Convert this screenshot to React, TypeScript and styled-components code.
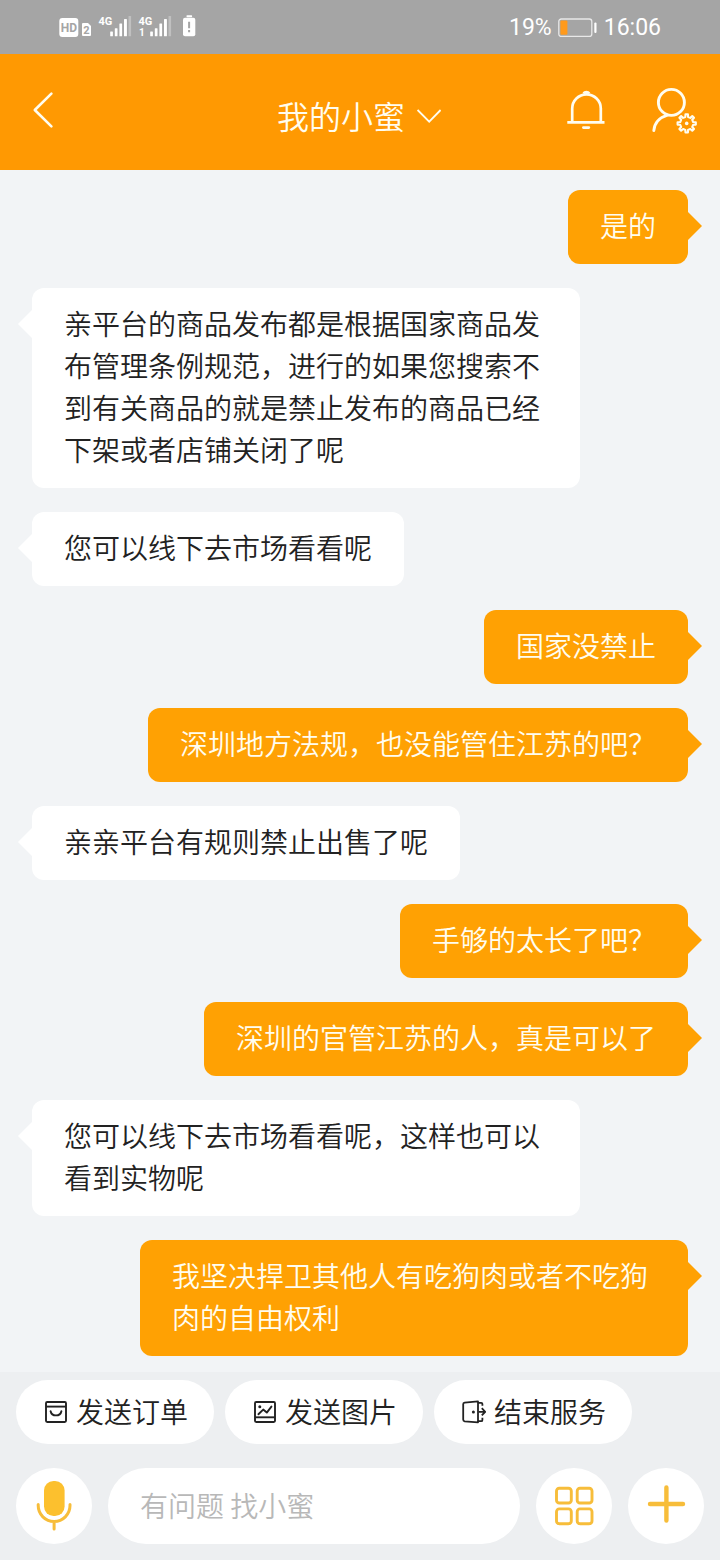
import React from "react";
import styled, { createGlobalStyle } from "styled-components";

const GlobalStyle = createGlobalStyle`
  * { box-sizing: border-box; }
  body {
    margin: 0;
    background: #f2f4f6;
    font-family: "Noto Sans CJK SC", "Noto Sans", sans-serif;
    font-weight: 350;
  }
  button, input { font: inherit; color: inherit; }
  svg { display: block; flex: none; }
`;

const Screen = styled.div`
  min-height: 100vh;
  display: flex;
  flex-direction: column;
`;

const StatusBar = styled.div`
  height: 54px;
  padding: 0 59px 0 58px;
  display: flex;
  align-items: center;
  justify-content: space-between;
  background: #a5a5a5;
  color: #fff;
  font-family: Roboto, sans-serif;
  font-size: 23px;
  line-height: 28px;
  font-weight: 400;
`;

const StatusGroup = styled.div`
  display: flex;
  align-items: center;
  gap: 6px;
  padding-top: 2px;
`;

const Header = styled.header`
  height: 116px;
  padding: 0 22px 4px 32px;
  display: grid;
  grid-template-columns: 1fr auto 1fr;
  align-items: center;
  background: #ff9902;
  color: #fffdf0;
`;

const IconButton = styled.button`
  padding: 0;
  border: 0;
  background: none;
  cursor: pointer;
`;

const TitleButton = styled(IconButton)`
  display: flex;
  align-items: center;
  gap: 12px;
  padding-top: 10px;
  margin-left: -12px;
  font-size: 32px;
  line-height: 40px;
`;

const HeaderActions = styled.div`
  display: flex;
  justify-content: flex-end;
  align-items: center;
  gap: 44px;
`;

const Chat = styled.main`
  flex: 1;
  padding: 20px 32px 16px;
  display: flex;
  flex-direction: column;
  gap: 24px;
`;

const Bubble = styled.div<{ $mine?: boolean }>`
  position: relative;
  align-self: ${(p) => (p.$mine ? "flex-end" : "flex-start")};
  max-width: calc(100% - 108px);
  padding: 14px 32px 18px;
  border-radius: 12px;
  background: ${(p) => (p.$mine ? "#ffa103" : "#fff")};
  color: ${(p) => (p.$mine ? "#fffdf0" : "#222")};
  font-size: 28px;
  line-height: 42px;

  &::after {
    content: "";
    position: absolute;
    top: 22px;
    ${(p) => (p.$mine ? "left: 100%;" : "right: 100%;")}
    border: 14px solid transparent;
    ${(p) =>
      p.$mine
        ? "border-right-width: 0; border-left-color: #ffa103;"
        : "border-left-width: 0; border-right-color: #fff;"}
  }
`;

const Footer = styled.footer`
  padding: 8px 16px 16px;
  display: flex;
  flex-direction: column;
  gap: 24px;
  background: #edeff1;
`;

const Shortcuts = styled.div`
  display: flex;
  gap: 11px;
`;

const Chip = styled.button`
  height: 64px;
  padding: 0 26px 0 28px;
  display: flex;
  align-items: center;
  gap: 8px;
  border: 0;
  border-radius: 32px;
  background: #fff;
  color: #222;
  font-size: 28px;
  line-height: 42px;
  white-space: nowrap;
  cursor: pointer;
`;

const ChipLabel = styled.span`
  padding-bottom: 2px;
`;

const InputRow = styled.form`
  display: flex;
  gap: 16px;
`;

const RoundButton = styled.button`
  flex: none;
  width: 76px;
  height: 76px;
  padding: 0;
  border: 0;
  border-radius: 50%;
  background: #fff;
  color: #f7bd3a;
  cursor: pointer;
`;

const MessageInput = styled.input`
  flex: 1;
  min-width: 0;
  height: 76px;
  padding: 0 32px 2px;
  border: 0;
  border-radius: 38px;
  background: #fff;
  color: #222;
  font-size: 28px;
  outline: none;

  &::placeholder {
    color: #b8b8b8;
    opacity: 1;
  }
`;

const SmallGlyphs = styled.text`
  font-family: Roboto, sans-serif;
  font-weight: 700;
`;

const messages: { text: string; mine?: boolean }[] = [
  { text: "是的", mine: true },
  {
    text: "亲平台的商品发布都是根据国家商品发布管理条例规范，进行的如果您搜索不到有关商品的就是禁止发布的商品已经下架或者店铺关闭了呢",
  },
  { text: "您可以线下去市场看看呢" },
  { text: "国家没禁止", mine: true },
  { text: "深圳地方法规，也没能管住江苏的吧？", mine: true },
  { text: "亲亲平台有规则禁止出售了呢" },
  { text: "手够的太长了吧？", mine: true },
  { text: "深圳的官管江苏的人，真是可以了", mine: true },
  { text: "您可以线下去市场看看呢，这样也可以看到实物呢" },
  { text: "我坚决捍卫其他人有吃狗肉或者不吃狗肉的自由权利", mine: true },
];

const SignalBars = ({ x }: { x: number }) => (
  <g transform={`translate(${x} 0)`}>
    <rect x="0" y="18.6" width="2.7" height="4.7" rx="0.5" />
    <rect x="4.6" y="15.3" width="2.7" height="8" rx="0.5" />
    <rect x="9.2" y="10.6" width="2.7" height="12.7" rx="0.5" />
    <rect x="13.8" y="6" width="2.9" height="17.3" rx="0.5" />
    <rect x="18.3" y="3" width="2.6" height="20.3" rx="0.5" opacity="0.3" />
  </g>
);

const NetworkIcons = () => (
  <svg width="140" height="28" viewBox="0 0 140 28" fill="#fff" aria-hidden="true">
    <rect x="1.3" y="5" width="19" height="19" rx="3" />
    <SmallGlyphs x="10.8" y="19" fontSize="12" textAnchor="middle" fill="#a5a5a5">
      HD
    </SmallGlyphs>
    <path d="M25 10h5l3 3v9a1 1 0 0 1-1 1h-7a1 1 0 0 1-1-1V11a1 1 0 0 1 1-1z" />
    <SmallGlyphs x="28.5" y="20.5" fontSize="11" textAnchor="middle" fill="#a5a5a5">
      2
    </SmallGlyphs>
    <SmallGlyphs x="40.5" y="12" fontSize="11">
      4G
    </SmallGlyphs>
    <SignalBars x={52.2} />
    <SmallGlyphs x="80.5" y="12" fontSize="11">
      4G
    </SmallGlyphs>
    <SmallGlyphs x="81" y="23.2" fontSize="10">
      1
    </SmallGlyphs>
    <SignalBars x={92.2} />
    <rect x="128.5" y="2.2" width="5.6" height="2" rx="0.6" />
    <rect x="125" y="4.7" width="12.3" height="18.6" rx="2" />
    <path d="M131.1 8.8v6.4M131.1 17v2.2" stroke="#a5a5a5" strokeWidth="2" />
  </svg>
);

const BatteryIcon = () => (
  <svg width="40" height="20" viewBox="0 0 40 20" fill="none" aria-hidden="true">
    <rect x="0.8" y="1" width="33" height="17.4" rx="2.5" stroke="#e8e8e8" strokeWidth="1.3" />
    <rect x="2.4" y="2.6" width="7" height="14.2" rx="1" fill="#ff9a1c" />
    <rect x="36.3" y="4.5" width="2.2" height="10.5" rx="1" fill="#fff" />
  </svg>
);

const BackIcon = () => (
  <svg width="24" height="40" viewBox="0 0 24 40" fill="none" stroke="currentColor" strokeWidth="2.6">
    <path d="M19.4 3.6 2.8 20l16.6 16.4" strokeLinecap="round" strokeLinejoin="round" />
  </svg>
);

const ChevronIcon = () => (
  <svg width="24" height="16" viewBox="0 0 24 16" fill="none" stroke="currentColor" strokeWidth="1.8">
    <path d="M.6 3 12.2 14.6 23.6 3" />
  </svg>
);

const BellIcon = () => (
  <svg width="40" height="40" viewBox="0 0 40 40" fill="none" stroke="currentColor" strokeWidth="2.7">
    <path d="M6.2 32V18.6a14.2 14.2 0 0 1 28.6 0V32M1.3 32.3h37.2" />
    <path d="M17.6 3.4a3.2 2.4 0 0 1 5.6 0" />
    <path d="M17.4 37.6h5.4" strokeLinecap="round" />
  </svg>
);

// Outline of a cog with evenly spaced flat teeth.
const cogPath = (cx: number, cy: number, outer: number, inner: number, teeth: number) => {
  const points: string[] = [];
  for (let i = 0; i < teeth; i++) {
    const steps: [number, number][] = [
      [-0.27, inner],
      [-0.17, outer],
      [0.17, outer],
      [0.27, inner],
    ];
    for (const [offset, radius] of steps) {
      const angle = ((i + offset) / teeth) * Math.PI * 2 - Math.PI / 2;
      points.push(`${(cx + Math.cos(angle) * radius).toFixed(2)} ${(cy + Math.sin(angle) * radius).toFixed(2)}`);
    }
  }
  return `M${points.join("L")}Z`;
};

const ProfileIcon = () => (
  <svg width="48" height="48" viewBox="0 0 48 48" fill="none" stroke="currentColor">
    <circle cx="21.4" cy="16.4" r="13" strokeWidth="2.9" />
    <path d="M3.8 44.6C4.6 37 9.4 31.6 17.4 29.2" strokeWidth="2.9" strokeLinecap="round" />
    <path d={cogPath(36.7, 37.4, 9.2, 6.6, 8)} strokeWidth="2.1" strokeLinejoin="round" />
    <circle cx="36.7" cy="37.4" r="1.8" fill="currentColor" stroke="none" />
  </svg>
);

const OrderIcon = () => (
  <svg width="24" height="24" viewBox="0 0 24 24" fill="none" stroke="currentColor" strokeWidth="1.9">
    <rect x="2" y="2" width="20" height="20" rx="1.2" />
    <path d="M2 6.6h20" />
    <path d="M6.6 11.2a5.5 5.2 0 0 0 10.8 0" strokeLinecap="round" />
  </svg>
);

const PictureIcon = () => (
  <svg width="24" height="24" viewBox="0 0 24 24" fill="none" stroke="currentColor" strokeWidth="1.9">
    <rect x="2" y="2" width="20" height="20" rx="1.2" />
    <path d="M2 17.3h20" />
    <path d="m5.4 14.2 4.8-4.6 3.6 3 4.6-6" strokeLinecap="round" strokeLinejoin="round" />
    <circle cx="6.8" cy="6.8" r="1.5" fill="currentColor" stroke="none" />
  </svg>
);

const ExitIcon = () => (
  <svg width="24" height="24" viewBox="0 0 24 24" fill="none" stroke="currentColor" strokeWidth="1.8" strokeLinejoin="round">
    <path d="M16 1.4 2.6 2.6Q1.2 2.8 1.2 4.2V19.6Q1.2 21 2.6 21.3L16 22.4Z" />
    <path d="M16 2.8h3.2q1.2 0 1.2 1.3v1.6M16 21.2h3.2q1.2 0 1.2-1.3v-2.2" />
    <path d="M16.6 11.8h6.2M19.8 8.2l3.4 3.6-3.4 3.6" />
    <circle cx="11.4" cy="12" r="1.5" fill="currentColor" stroke="none" />
  </svg>
);

const MicIcon = () => (
  <svg width="76" height="76" viewBox="0 0 76 76" fill="none" stroke="currentColor" strokeWidth="3">
    <rect x="28" y="13" width="20.6" height="35" rx="9.5" fill="#fcc02e" stroke="none" />
    <path d="M22.2 36.4v1.2a15.8 15.8 0 0 0 31.8 0v-1.2M38.1 54v7" strokeLinecap="round" />
  </svg>
);

const GridIcon = () => (
  <svg width="76" height="76" viewBox="0 0 76 76" fill="none" stroke="currentColor" strokeWidth="2.9">
    <rect x="20.5" y="20.2" width="14.8" height="14.8" rx="2.8" />
    <rect x="41.2" y="20.2" width="14.8" height="14.8" rx="2.8" />
    <rect x="20.5" y="40.9" width="14.8" height="14.8" rx="2.8" />
    <rect x="41.2" y="40.9" width="14.8" height="14.8" rx="2.8" />
  </svg>
);

const PlusIcon = () => (
  <svg width="76" height="76" viewBox="0 0 76 76" fill="none" stroke="currentColor" strokeWidth="4.4">
    <path d="M22 36h33M38.4 19.4v33.2" strokeLinecap="round" />
  </svg>
);

export default function App() {
  return (
    <>
      <GlobalStyle />
      <Screen>
        <StatusBar>
          <NetworkIcons />
          <StatusGroup>
            <span>19%</span>
            <BatteryIcon />
            <span>16:06</span>
          </StatusGroup>
        </StatusBar>
        <Header>
          <IconButton type="button" aria-label="返回">
            <BackIcon />
          </IconButton>
          <TitleButton type="button">
            我的小蜜
            <ChevronIcon />
          </TitleButton>
          <HeaderActions>
            <IconButton type="button" aria-label="通知">
              <BellIcon />
            </IconButton>
            <IconButton type="button" aria-label="个人设置">
              <ProfileIcon />
            </IconButton>
          </HeaderActions>
        </Header>
        <Chat>
          {messages.map((message, index) => (
            <Bubble key={index} $mine={message.mine}>
              {message.text}
            </Bubble>
          ))}
        </Chat>
        <Footer>
          <Shortcuts>
            <Chip type="button">
              <OrderIcon />
              <ChipLabel>发送订单</ChipLabel>
            </Chip>
            <Chip type="button">
              <PictureIcon />
              <ChipLabel>发送图片</ChipLabel>
            </Chip>
            <Chip type="button">
              <ExitIcon />
              <ChipLabel>结束服务</ChipLabel>
            </Chip>
          </Shortcuts>
          <InputRow onSubmit={(event) => event.preventDefault()}>
            <RoundButton type="button" aria-label="语音">
              <MicIcon />
            </RoundButton>
            <MessageInput type="text" aria-label="输入消息" placeholder="有问题 找小蜜" />
            <RoundButton type="button" aria-label="服务">
              <GridIcon />
            </RoundButton>
            <RoundButton type="button" aria-label="更多">
              <PlusIcon />
            </RoundButton>
          </InputRow>
        </Footer>
      </Screen>
    </>
  );
}
